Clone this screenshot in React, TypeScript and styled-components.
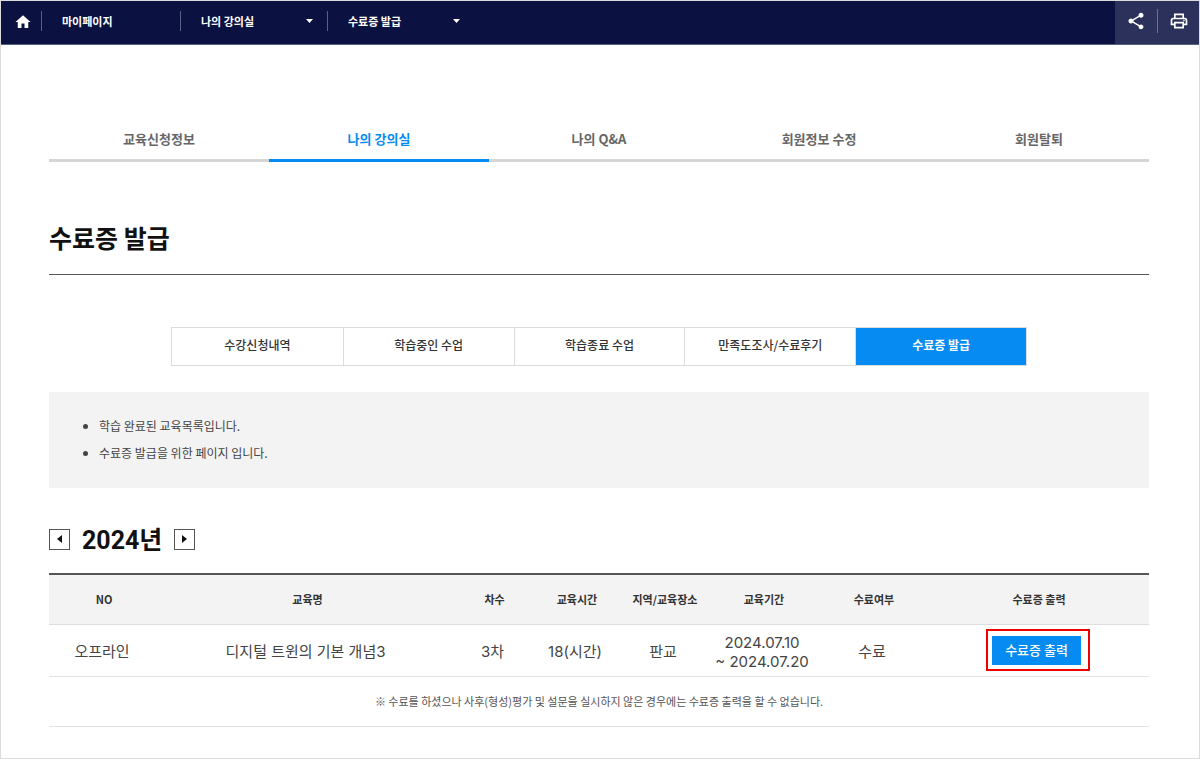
import React from "react";
import styled, { createGlobalStyle } from "styled-components";
import { MdHome, MdOutlinePrint, MdShare } from "react-icons/md";

const BLUE = "#058bf2";

const GlobalStyle = createGlobalStyle`
  *, *::before, *::after { box-sizing: border-box; }
  body {
    margin: 0;
    background: #fff;
    color: #333;
    font-family: "Noto Sans CJK KR", "Noto Sans", sans-serif;
    font-size: 12px;
    line-height: 20px;
  }
  button { font: inherit; color: inherit; cursor: pointer; }
  a { color: inherit; text-decoration: none; }
  ul { margin: 0; padding: 0; }
`;

const Page = styled.div`
  min-height: 100vh;
  border: 1px solid #dcdcdc;
`;

const TopBar = styled.header`
  display: flex;
  justify-content: space-between;
  height: 44px;
  background: #0b1242;
  border-bottom: 1px solid #5a5f80;
  color: #fff;
`;

const Breadcrumb = styled.nav`
  display: flex;
  align-items: center;
  height: 40px;
  font-size: 11px;
  font-weight: 700;
`;

const HomeLink = styled.a`
  display: flex;
  justify-content: center;
  width: 40px;
  padding: 2px 0 0 4px;
  font-size: 18px;
`;

const Crumb = styled.button<{ $width: number }>`
  display: flex;
  align-items: center;
  justify-content: space-between;
  width: ${(p) => p.$width}px;
  height: 20px;
  padding: 0 14px 0 20px;
  border: 0;
  border-left: 1px solid #5c6184;
  background: none;
`;

const Tools = styled.div`
  display: flex;
  align-items: center;
  padding-bottom: 4px;
  background: #2b315a;
`;

const ToolButton = styled.button`
  display: flex;
  align-items: center;
  justify-content: center;
  width: 42px;
  height: 24px;
  padding: 0;
  border: 0;
  background: none;
  font-size: 20px;

  & + & {
    border-left: 1px solid #6b7092;
  }
`;

const Main = styled.main`
  padding: 74px 50px 0 48px;
`;

const Tabs = styled.nav`
  display: grid;
  grid-template-columns: repeat(5, 1fr);
`;

const Tab = styled.a<{ $active?: boolean }>`
  height: 43px;
  padding-top: 10px;
  border-bottom: 3px solid ${(p) => (p.$active ? BLUE : "#d6d6d6")};
  color: ${(p) => (p.$active ? BLUE : "#666")};
  font-size: 13px;
  font-weight: 700;
  text-align: center;
`;

const Title = styled.h1`
  margin: 55px 0 0;
  padding-bottom: 17px;
  border-bottom: 1px solid #555;
  color: #111;
  font-size: 25px;
  font-weight: 700;
  line-height: 40px;
`;

const SubTabs = styled.nav`
  display: grid;
  grid-template-columns: repeat(5, 1fr);
  max-width: 856px;
  margin: 52px auto 26px;
  border: 1px solid #dcdcdc;
`;

const SubTab = styled.a<{ $active?: boolean }>`
  height: 37px;
  padding-top: 7px;
  background: ${(p) => (p.$active ? BLUE : "#fff")};
  color: ${(p) => (p.$active ? "#fff" : "#333")};
  font-weight: ${(p) => (p.$active ? 700 : 500)};
  text-align: center;

  & + & {
    border-left: 1px solid #dcdcdc;
  }
`;

const Notice = styled.ul`
  padding: 20px 50px 22px;
  background: #f3f3f3;
  color: #444;
  line-height: 27px;
`;

const YearPicker = styled.div`
  display: flex;
  align-items: center;
  gap: 12px;
  margin: 31px 0 14px;
`;

const Year = styled.h2`
  height: 40px;
  margin: 0;
  padding-top: 2px;
  color: #111;
  font-family: Roboto, "Noto Sans CJK KR", sans-serif;
  font-size: 25px;
  font-weight: 700;
  line-height: 40px;
`;

const YearButton = styled.button`
  display: flex;
  align-items: center;
  justify-content: center;
  width: 21px;
  height: 21px;
  padding: 0;
  border: 1px solid #555;
  background: #fff;
  color: #111;
`;

const Table = styled.table`
  width: 100%;
  border-collapse: collapse;
  border-top: 2px solid #555;
  table-layout: fixed;
  text-align: center;
`;

const HeadCell = styled.th<{ $width: number }>`
  width: ${(p) => p.$width}%;
  height: 50px;
  padding: 0;
  border-bottom: 1px solid #dedede;
  background: #f3f3f3;
  font-size: 11px;
  font-weight: 700;
`;

const Cell = styled.td`
  height: 52px;
  padding: 3px 4px 0 0;
  border-bottom: 1px solid #e2e2e2;
  color: #444;
  font-family: Inter, "Noto Sans CJK KR", sans-serif;
  font-size: 15px;
  font-weight: 400;
  line-height: 19px;
`;

const ActionCell = styled(Cell)`
  padding: 0 2px 0 0;
`;

const NoteCell = styled.td`
  height: 50px;
  padding: 0;
  border-bottom: 1px solid #e2e2e2;
  color: #555;
  font-size: 11px;
`;

const Highlight = styled.span`
  display: inline-flex;
  padding: 5px 7px 4px 4px;
  border: 2px solid #f00000;
  vertical-align: middle;
`;

const PrintButton = styled.button`
  width: 89px;
  height: 29px;
  padding: 0 0 2px;
  border: 0;
  background: ${BLUE};
  color: #fff;
  font-family: "Noto Sans CJK KR", sans-serif;
  font-size: 13px;
  font-weight: 500;
`;

const Caret = () => (
  <svg width="7" height="4" viewBox="0 0 7 4" aria-hidden="true">
    <path d="M0 0h7L3.500 4z" fill="currentColor" />
  </svg>
);

const Arrow = ({ left }: { left?: boolean }) => (
  <svg width="5" height="8" viewBox="0 0 5 8" aria-hidden="true">
    <path d={left ? "M5 0v8L0 4z" : "M0 0v8l5-4z"} fill="currentColor" />
  </svg>
);

const tabs = ["교육신청정보", "나의 강의실", "나의 Q&A", "회원정보 수정", "회원탈퇴"];
const subTabs = ["수강신청내역", "학습중인 수업", "학습종료 수업", "만족도조사/수료후기", "수료증 발급"];
const columns: [string, number][] = [
  ["NO", 10],
  ["교육명", 27],
  ["차수", 7],
  ["교육시간", 8],
  ["지역/교육장소", 8],
  ["교육기간", 10],
  ["수료여부", 10],
  ["수료증 출력", 20],
];

export default function App() {
  return (
    <Page>
      <GlobalStyle />
      <TopBar>
        <Breadcrumb>
          <HomeLink href="#" aria-label="홈">
            <MdHome />
          </HomeLink>
          <Crumb $width={139}>마이페이지</Crumb>
          <Crumb $width={147}>
            나의 강의실
            <Caret />
          </Crumb>
          <Crumb $width={147}>
            수료증 발급
            <Caret />
          </Crumb>
        </Breadcrumb>
        <Tools>
          <ToolButton aria-label="공유">
            <MdShare />
          </ToolButton>
          <ToolButton aria-label="인쇄">
            <MdOutlinePrint />
          </ToolButton>
        </Tools>
      </TopBar>
      <Main>
        <Tabs>
          {tabs.map((label, i) => (
            <Tab key={label} href="#" $active={i === 1}>
              {label}
            </Tab>
          ))}
        </Tabs>
        <Title>수료증 발급</Title>
        <SubTabs>
          {subTabs.map((label, i) => (
            <SubTab key={label} href="#" $active={i === 4}>
              {label}
            </SubTab>
          ))}
        </SubTabs>
        <Notice>
          <li>학습 완료된 교육목록입니다.</li>
          <li>수료증 발급을 위한 페이지 입니다.</li>
        </Notice>
        <YearPicker>
          <YearButton aria-label="이전 연도">
            <Arrow left />
          </YearButton>
          <Year>2024년</Year>
          <YearButton aria-label="다음 연도">
            <Arrow />
          </YearButton>
        </YearPicker>
        <Table>
          <thead>
            <tr>
              {columns.map(([label, width]) => (
                <HeadCell key={label} scope="col" $width={width}>
                  {label}
                </HeadCell>
              ))}
            </tr>
          </thead>
          <tbody>
            <tr>
              <Cell>오프라인</Cell>
              <Cell>디지털 트윈의 기본 개념3</Cell>
              <Cell>3차</Cell>
              <Cell>18(시간)</Cell>
              <Cell>판교</Cell>
              <Cell>
                2024.07.10
                <br />~ 2024.07.20
              </Cell>
              <Cell>수료</Cell>
              <ActionCell>
                <Highlight>
                  <PrintButton>수료증 출력</PrintButton>
                </Highlight>
              </ActionCell>
            </tr>
            <tr>
              <NoteCell colSpan={8}>
                ※ 수료를 하셨으나 사후(형성)평가 및 설문을 실시하지 않은 경우에는 수료증 출력을 할 수 없습니다.
              </NoteCell>
            </tr>
          </tbody>
        </Table>
      </Main>
    </Page>
  );
}
